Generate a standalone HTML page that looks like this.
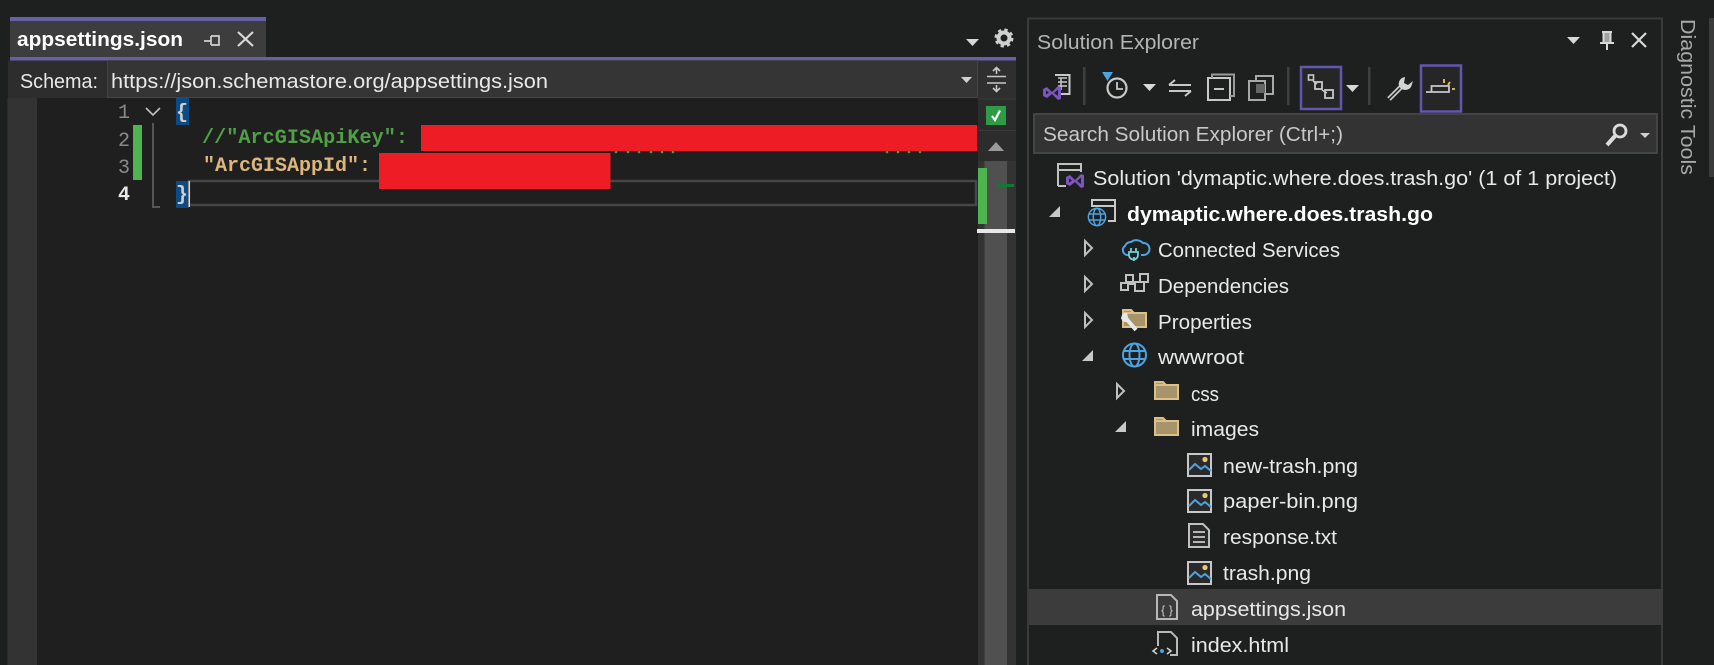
<!DOCTYPE html>
<html><head><meta charset="utf-8"><style>
html,body{margin:0;padding:0;background:#1e1f1f;width:1714px;height:665px;overflow:hidden}
svg{display:block}
text{font-family:"Liberation Sans",sans-serif;font-size:20px;fill:#e8e8e8}
.m{font-family:"Liberation Mono",monospace;font-size:20px;font-weight:bold}
.i{fill:none;stroke:#c8c8c8;stroke-width:2}
.f{fill:#a8946a;stroke:#dcc08a;stroke-width:2}
</style></head><body>
<svg width="1714" height="665" viewBox="0 0 1714 665" xmlns="http://www.w3.org/2000/svg">
<defs>
<g id="vs"><path d="M0 5 L4 3 L9 8 L15 2 L18 3 L18 15 L15 16 L9 10 L4 14 L0 12Z M3 6.5 L3 10.5 L6 8.5Z M11 9 L15 12 L15 5.5Z" fill="#7d55c0" fill-rule="evenodd"/></g>
<g id="fold"><path d="M1 3 H9 L12 6 H24 V20 H1Z" class="f"/><path d="M1 6 H12" stroke="#dcc08a" stroke-width="2" fill="none"/></g>
<g id="img"><rect x="1" y="1" width="23" height="22" fill="#2a2a2a" stroke="#c8c8c8" stroke-width="2"/><circle cx="18" cy="6.5" r="2.6" fill="#e8c66e"/><path d="M2 17 L8 11 L14 16 L18 13 L24 18" fill="none" stroke="#4ba3e0" stroke-width="2"/></g>
<g id="globe" fill="none" stroke="#4ba3e0" stroke-width="2"><circle cx="0" cy="0" r="11.5"/><ellipse cx="0" cy="0" rx="5" ry="11.5"/><path d="M-11 -4 H11 M-11 4 H11"/></g>
<g id="hol"><path d="M1 1 L8 8 L1 15Z" fill="#1e1f1f" stroke="#c0c0c0" stroke-width="2"/></g>
<g id="sol"><path d="M11 0 V11 H0Z" fill="#c8c8c8"/></g>
<g id="dd"><path d="M0 0 H13 L6.5 7Z" fill="#d8d8d8"/></g>
</defs>

<rect width="1714" height="665" fill="#1e1f1f"/>

<!-- tab -->
<rect x="10" y="18" width="256" height="39" fill="#3d3d3d"/>
<rect x="10" y="17" width="256" height="4" fill="#675fa8"/>
<rect x="10" y="57" width="1006" height="3.5" fill="#675fa8"/>
<text x="17" y="46" style="font-weight:bold;fill:#fff" textLength="166" lengthAdjust="spacingAndGlyphs">appsettings.json</text>
<path d="M204 41 H211 M211 36 V45 M211 36 H219 V45 H211" fill="none" stroke="#d0d0d0" stroke-width="1.7"/>
<path d="M238 32 L253 46 M253 32 L238 46" stroke="#d8d8d8" stroke-width="2.2"/>
<use href="#dd" x="966" y="39"/>
<g transform="translate(1004,38)"><circle r="5.5" fill="none" stroke="#d0d0d0" stroke-width="4"/><circle r="8" fill="none" stroke="#d0d0d0" stroke-width="3" stroke-dasharray="3.2 3.1"/></g>

<!-- schema bar -->
<rect x="8" y="60.500" width="970" height="38" fill="#2d2d2d"/>
<rect x="107.500" y="60.500" width="870" height="37" fill="#353535" stroke="#444"/>
<text x="20" y="88" textLength="78" lengthAdjust="spacingAndGlyphs">Schema:</text>
<text x="111" y="88" textLength="437" lengthAdjust="spacingAndGlyphs">https://json.schemastore.org/appsettings.json</text>
<path d="M961 77 H972 L966.500 83Z" fill="#d0d0d0"/>

<!-- editor -->
<rect x="37" y="98" width="941" height="567" fill="#1f1f1f"/>
<rect x="7" y="98" width="1" height="567" fill="#2a2a2a"/>
<rect x="8" y="98" width="29" height="567" fill="#333"/>
<text class="m" x="118" y="118" style="fill:#8a8a8a;font-weight:normal">1</text>
<text class="m" x="118" y="146" style="fill:#8a8a8a;font-weight:normal">2</text>
<text class="m" x="118" y="173" style="fill:#8a8a8a;font-weight:normal">3</text>
<text class="m" x="118" y="200" style="fill:#e8e8e8">4</text>
<rect x="133" y="125" width="9" height="55" fill="#4fb350"/>
<path d="M146 108 L153 115 L160 108" fill="none" stroke="#c0c0c0" stroke-width="1.600"/>
<path d="M153 123 V207 H160" fill="none" stroke="#555" stroke-width="2"/>

<rect x="176" y="98" width="13" height="27" fill="#0e4a84"/>
<text class="m" x="176" y="118" style="fill:#d0d0d0">{</text>
<rect x="176" y="181" width="13" height="27" fill="#0e4a84"/>
<rect x="189" y="181" width="787" height="24" fill="none" stroke="#464646" stroke-width="2.500"/>
<text class="m" x="176" y="200" style="fill:#d0d0d0">}</text>
<rect x="188.500" y="181" width="1.500" height="26" fill="#dcdcdc"/>

<text class="m" x="202" y="143" style="fill:#4fa047" textLength="206" lengthAdjust="spacingAndGlyphs">//"ArcGISApiKey":</text>
<text class="m" x="203" y="171" style="fill:#dcb67a" textLength="168" lengthAdjust="spacingAndGlyphs">"ArcGISAppId":</text>
<g fill="#3aa53a"><circle cx="616" cy="152" r="1.300"/><circle cx="628" cy="152" r="1.300"/><circle cx="639" cy="152" r="1.300"/><circle cx="651" cy="152" r="1.300"/><circle cx="662" cy="152" r="1.300"/><circle cx="673" cy="152" r="1.300"/><circle cx="887" cy="152" r="1.300"/><circle cx="898" cy="152" r="1.300"/><circle cx="909" cy="152" r="1.300"/><circle cx="920" cy="152" r="1.300"/></g>
<rect x="421" y="125" width="556" height="26" fill="#ee1d25"/>
<rect x="379" y="153" width="231.500" height="36" fill="#ee1d25"/>

<!-- margin right -->
<rect x="978" y="60.500" width="38" height="604.500" fill="#2c2c2c"/>
<rect x="978" y="60.500" width="38" height="38" fill="#2f2f2f"/>
<path d="M987 76.500 H1006 M987 83 H1006 M996.500 68 V74 M996.500 85 V91 M993 71 L996.500 67.500 L1000 71 M993 88 L996.500 91.500 L1000 88" fill="none" stroke="#c8c8c8" stroke-width="1.600"/>
<rect x="978" y="98.500" width="38" height="1" fill="#3a3a3a"/>
<rect x="978" y="130" width="38" height="1" fill="#3a3a3a"/>
<rect x="986" y="106" width="20" height="19" fill="#2e9c46"/>
<path d="M992 116 L995 120 L1000 110.500" fill="none" stroke="#fff" stroke-width="2.200"/>
<path d="M988 151 L996 142 L1004 151Z" fill="#9a9a9a"/>
<rect x="978" y="161" width="38" height="504" fill="#333"/>
<rect x="984.500" y="161" width="22.500" height="504" fill="#505050"/>
<rect x="978" y="168" width="9" height="56" fill="#4fb350"/>
<rect x="997" y="184" width="17" height="3" fill="#0e7a32"/>
<rect x="977" y="229" width="38" height="4" fill="#e8e8e8"/>

<!-- solution explorer panel -->
<rect x="1028" y="18.500" width="634" height="660" fill="none" stroke="#3a3a3a" stroke-width="2"/>
<text x="1037" y="49" style="fill:#b4b4b4" textLength="162" lengthAdjust="spacingAndGlyphs">Solution Explorer</text>
<use href="#dd" x="1567" y="37"/>
<path d="M1602 32 H1612 M1603.500 32 V43 M1610.500 32 V43 M1600 43 H1614 M1607 43 V50" fill="none" stroke="#d8d8d8" stroke-width="2"/>
<rect x="1603.500" y="32" width="7" height="11" fill="#d8d8d8" opacity=".7"/>
<path d="M1632 33 L1646 47 M1646 33 L1632 47" stroke="#d8d8d8" stroke-width="2.200"/>

<!-- toolbar -->
<path d="M1055 75 H1069.500 V94 H1060" fill="none" stroke="#c8c8c8" stroke-width="2"/>
<path d="M1058 78 H1067 M1058 82 H1067 M1058 86 H1067 M1061 78 V90" stroke="#c8c8c8" stroke-width="1.500" fill="none"/>
<use href="#vs" x="1043" y="84"/>
<rect x="1083" y="67" width="2.500" height="38" fill="#3f3f3f"/>
<path d="M1102 72 H1113 L1107.500 81Z" fill="#4ba3e0"/>
<circle cx="1117" cy="88" r="9.500" fill="none" stroke="#c8c8c8" stroke-width="2.200"/>
<path d="M1117 82 V89 H1123" fill="none" stroke="#c8c8c8" stroke-width="1.800"/>
<use href="#dd" x="1143" y="84"/>
<path d="M1169 85 H1191 M1169 85 L1175 80 M1169 91 H1191 M1191 91 L1185 96" fill="none" stroke="#c8c8c8" stroke-width="2"/>
<rect x="1208" y="78" width="22" height="22" fill="none" stroke="#c8c8c8" stroke-width="2"/>
<path d="M1212 78 V74.500 H1234 V96 H1230" fill="none" stroke="#9a9a9a" stroke-width="2"/>
<path d="M1214 89 H1224" stroke="#c8c8c8" stroke-width="2"/>
<rect x="1249" y="81" width="16" height="19" fill="none" stroke="#a8a8a8" stroke-width="2"/>
<path d="M1256 81 V76 H1273 V94 H1265" fill="none" stroke="#a8a8a8" stroke-width="2"/>
<rect x="1256" y="84" width="9" height="9" fill="#666"/>
<rect x="1287" y="67" width="2.500" height="38" fill="#3f3f3f"/>
<rect x="1301" y="67" width="40" height="42" fill="#262626" stroke="#6257b0" stroke-width="2.500"/>
<path d="M1313 81 L1317 84 M1322 90 L1327 93" stroke="#c8c8c8" stroke-width="1.600" fill="none"/>
<rect x="1308.500" y="75" width="5" height="5" fill="none" stroke="#c8c8c8" stroke-width="1.600"/>
<rect x="1315" y="82" width="7" height="7" fill="none" stroke="#c8c8c8" stroke-width="1.800"/>
<rect x="1325" y="90" width="8" height="8" fill="none" stroke="#c8c8c8" stroke-width="1.800"/>
<use href="#dd" x="1346" y="85"/>
<rect x="1368" y="67" width="2.500" height="38" fill="#3f3f3f"/>
<path d="M1389 99 L1402 86" stroke="#c8c8c8" stroke-width="5" fill="none"/>
<path d="M1389 99 L1402 86" stroke="#1e1f1f" stroke-width="1.500" fill="none"/>
<path d="M1405 77 A7 7 0 0 0 1399 86 A7 7 0 0 0 1411 87 L1413 81 L1408 85 L1404 83Z" fill="#d4d4d4"/>
<rect x="1421" y="65.500" width="40" height="46" fill="#262626" stroke="#6257b0" stroke-width="2.500"/>
<path d="M1426 92 H1449 V86 H1431.500 V92" fill="none" stroke="#c8c8c8" stroke-width="1.800"/>
<path d="M1444 79 V83 M1450 82 L1448 85 M1452 89 H1455" stroke="#e8c66e" stroke-width="1.800" fill="none"/>

<!-- search -->
<rect x="1034" y="114" width="623" height="39" fill="#333" stroke="#444" stroke-width="2"/>
<text x="1043" y="141" style="fill:#c8c8c8" textLength="300" lengthAdjust="spacingAndGlyphs">Search Solution Explorer (Ctrl+;)</text>
<circle cx="1620" cy="131" r="6" fill="none" stroke="#dcdcdc" stroke-width="2.800"/>
<path d="M1615 136 L1607 145" stroke="#dcdcdc" stroke-width="4"/>
<path d="M1640 133 H1650 L1645 138Z" fill="#d0d0d0"/>

<!-- tree -->
<rect x="1029" y="589" width="634" height="36" fill="#3c3c3c"/>

<path d="M1058 186 V164 H1081 V172 M1058 170 H1081 M1058 186 H1066" fill="none" stroke="#c0c0c0" stroke-width="2"/>
<use href="#vs" x="1066" y="172"/>
<text x="1093" y="185" textLength="524" lengthAdjust="spacingAndGlyphs">Solution 'dymaptic.where.does.trash.go' (1 of 1 project)</text>

<use href="#sol" x="1049" y="206"/>
<path d="M1092 207 V200 H1115 V221 H1108 M1092 206 H1115" fill="none" stroke="#c8c8c8" stroke-width="2"/>
<use href="#globe" transform="translate(1097,217) scale(.75)"/>
<text x="1127" y="221" style="font-weight:bold;fill:#fff" textLength="306" lengthAdjust="spacingAndGlyphs">dymaptic.where.does.trash.go</text>

<use href="#hol" x="1084" y="240"/>
<path d="M1129 255 H1127 A5 5 0 0 1 1125 246 A6 6 0 0 1 1131 242 A9 9 0 0 1 1143 243 A6 6 0 0 1 1144 255 H1141" fill="none" stroke="#4ba3e0" stroke-width="2"/>
<path d="M1131 248 V252 M1136 248 V252 M1129 252 H1138 V255 A3 3 0 0 1 1129 255Z M1134 257 V261" fill="none" stroke="#6fd0d8" stroke-width="1.800"/>
<text x="1158" y="257" textLength="182" lengthAdjust="spacingAndGlyphs">Connected Services</text>

<use href="#hol" x="1084" y="276"/>
<g fill="none" stroke="#c0c0c0" stroke-width="2"><rect x="1121" y="283" width="7" height="7"/><rect x="1126" y="275" width="7" height="7"/><rect x="1135" y="282" width="9" height="9"/><rect x="1140" y="274" width="8" height="8"/><path d="M1128 284 H1135"/></g>
<text x="1158" y="293" textLength="131" lengthAdjust="spacingAndGlyphs">Dependencies</text>

<use href="#hol" x="1084" y="312"/>
<use href="#fold" x="1122" y="307"/>
<path d="M1124 316 L1136 330" stroke="#e8e8e8" stroke-width="4"/>
<path d="M1121 318 A5 5 0 0 0 1129 321 L1127 313 A5 5 0 0 0 1122 315Z" fill="#e8e8e8"/>
<text x="1158" y="329" textLength="94" lengthAdjust="spacingAndGlyphs">Properties</text>

<use href="#sol" x="1082" y="350"/>
<use href="#globe" transform="translate(1134.500,355)"/>
<text x="1158" y="364" textLength="86" lengthAdjust="spacingAndGlyphs">wwwroot</text>

<use href="#hol" x="1116" y="383"/>
<use href="#fold" x="1154" y="379"/>
<text x="1191" y="401" textLength="28" lengthAdjust="spacingAndGlyphs">css</text>

<use href="#sol" x="1115" y="421"/>
<use href="#fold" x="1154" y="415"/>
<text x="1191" y="436" textLength="68" lengthAdjust="spacingAndGlyphs">images</text>

<use href="#img" x="1187" y="453"/>
<text x="1223" y="473" textLength="135" lengthAdjust="spacingAndGlyphs">new-trash.png</text>
<use href="#img" x="1187" y="489"/>
<text x="1223" y="508" textLength="135" lengthAdjust="spacingAndGlyphs">paper-bin.png</text>
<path d="M1189 524 H1203 L1209 530 V547 H1189Z" fill="#2a2a2a" stroke="#c0c0c0" stroke-width="2"/>
<path d="M1193 532 H1205 M1193 537 H1205 M1193 542 H1205" stroke="#c8c8c8" stroke-width="1.800"/>
<text x="1223" y="544" textLength="114" lengthAdjust="spacingAndGlyphs">response.txt</text>
<use href="#img" x="1187" y="561"/>
<text x="1223" y="580" textLength="88" lengthAdjust="spacingAndGlyphs">trash.png</text>

<path d="M1157 595 H1171 L1177 601 V619 H1157Z" fill="#3a3a3a" stroke="#b8b8b8" stroke-width="2"/>
<text x="1161" y="614" style="font-size:12px;fill:#c8c8c8" textLength="12" lengthAdjust="spacingAndGlyphs">{ }</text>
<text x="1191" y="616" textLength="155" lengthAdjust="spacingAndGlyphs">appsettings.json</text>

<path d="M1158 646 V632 H1171 L1177 638 V655 H1170" fill="none" stroke="#b8b8b8" stroke-width="2"/>
<path d="M1157 648 L1153 651 L1157 654 M1167 648 L1171 651 L1167 654" fill="none" stroke="#d0d0d0" stroke-width="1.600"/>
<circle cx="1162" cy="651" r="2" fill="#4ba3e0"/>
<text x="1191" y="652" textLength="98" lengthAdjust="spacingAndGlyphs">index.html</text>

<!-- diagnostic tools -->
<text transform="translate(1681,19) rotate(90)" style="fill:#a8a8a8" textLength="156" lengthAdjust="spacingAndGlyphs">Diagnostic Tools</text>
<rect x="1709" y="18" width="5" height="159" fill="#3a3a3a"/>
</svg>
</body></html>
